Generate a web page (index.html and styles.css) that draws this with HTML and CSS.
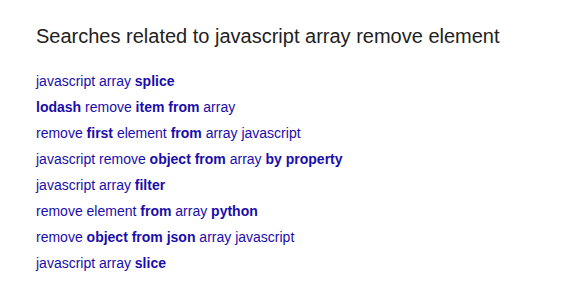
FILE: index.html
```html
<!DOCTYPE html>
<html>
<head>
<meta name="viewport" content="width=device-width, initial-scale=1">
<link rel="stylesheet" href="styles.css">
</head>
<body>

<div class="related">
  <h3 class="title">Searches related to javascript array remove element</h3>
  <ul class="links">
    <li><a href="#">javascript array <b>splice</b></a></li>
    <li><a href="#"><b>lodash</b> remove <b>item from</b> array</a></li>
    <li><a href="#">remove <b>first</b> element <b>from</b> array javascript</a></li>
    <li><a href="#">javascript remove <b>object from</b> array <b>by property</b></a></li>
    <li><a href="#">javascript array <b>filter</b></a></li>
    <li><a href="#">remove element <b>from</b> array <b>python</b></a></li>
    <li><a href="#">remove <b>object from json</b> array javascript</a></li>
    <li><a href="#">javascript array <b>slice</b></a></li>
  </ul>
</div>

</body>
</html>
```

FILE: styles.css
```css
body {
  margin: 0;
  background: #fff;
  font-family: "Liberation Sans", Arial, sans-serif;
}

/* Block of related searches */
.related {
  padding: 24px 36px;
}

.title {
  margin: 0 0 20px 0;
  font-size: 20px;
  font-weight: normal;
  line-height: 24px;
  color: #222;
}

/* Link list */
.links {
  margin: 0;
  padding: 0;
  list-style: none;
}

.links li {
  font-size: 14px;
  line-height: 26px;
}

.links a {
  color: #1a0dab;
  text-decoration: none;
}

.links b {
  font-weight: bold;
}
```
